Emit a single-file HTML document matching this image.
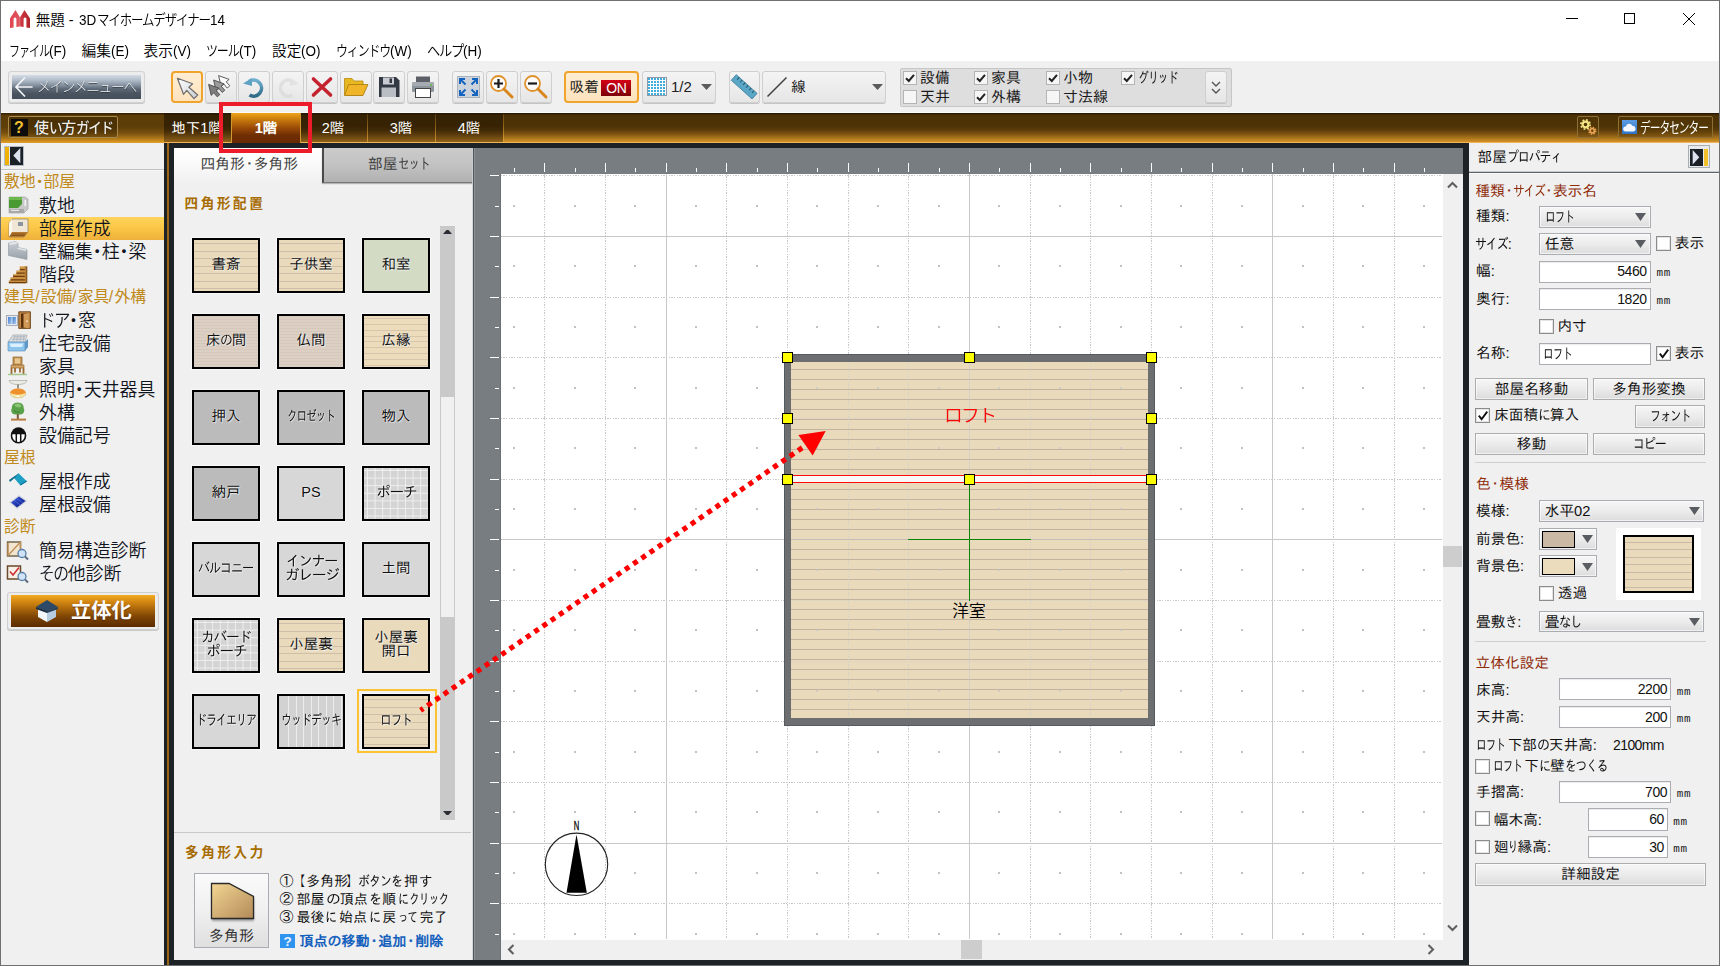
<!DOCTYPE html>
<html lang="ja"><head><meta charset="utf-8"><title>無題 - 3Dマイホームデザイナー14</title>
<style>
*{box-sizing:border-box;margin:0;padding:0}
html,body{width:1720px;height:966px;overflow:hidden;background:#f0f0f0}
body{position:relative;font-family:"Liberation Sans","Noto Sans CJK JP",sans-serif;font-size:15px;color:#000}
#app{position:absolute;left:0;top:0;width:1720px;height:966px;overflow:hidden}
#app div{position:absolute}
#app svg{position:absolute;overflow:visible}
.t{white-space:nowrap;line-height:1}
.kn{display:inline-block;transform-origin:0 50%;white-space:nowrap}
.md{display:inline-block;white-space:nowrap}

.tb{border:1px solid #cfcfcf;border-radius:3px;background:linear-gradient(#f4f4f4,#e6e6e6);box-shadow:0 1px 0 #c4c4c4}
.tbs{border:2px solid #f0a42c;border-radius:4px;background:linear-gradient(#ffedd2,#fde3bd)}
.cb{width:14px;height:14px;border:1px solid #b4b4b4;background:#f6f6f6}
.ft{color:#fff;font-size:14.5px;line-height:30.5px;font-family:'Liberation Sans','IPAGothic','Noto Sans CJK JP',sans-serif;text-align:center;white-space:nowrap}


.lh{color:#c08a1c;font-size:15.8px;line-height:23px;white-space:nowrap;left:4px}
.li{color:#10141c;font-size:17.9px;line-height:23px;white-space:nowrap;left:39px;margin-top:2px;font-weight:350}



.rb{border:2px solid #000;width:68px;height:55px;box-shadow:0 0 0 1px #f9f9f9}
.rl{font-family:"Liberation Sans","IPAGothic","Noto Sans CJK JP",sans-serif;font-size:14.5px;line-height:15px;color:#111;text-align:center;white-space:nowrap;width:68px;text-shadow:0 0 2px rgba(255,255,255,.75),1px 1px 1px rgba(255,255,255,.55)}
.gh{font-weight:700;color:#a76b00;font-size:13.5px;letter-spacing:2.7px;line-height:16px;white-space:nowrap}


.rt{font-family:'Liberation Sans','IPAGothic','Noto Sans CJK JP',sans-serif;font-size:14.7px;line-height:17px;white-space:nowrap;color:#101010}
.dd{border:1px solid #a9adb2;background:linear-gradient(#f6f6f6 0%,#ececec 50%,#dcdcdc 100%);box-shadow:inset 0 0 0 1px rgba(255,255,255,.6)}
.inp{border:1px solid #abadb3;background:#fff;box-shadow:inset 0 1px 1px rgba(0,0,0,.08)}
.btn{border:1px solid #adadad;background:linear-gradient(#f6f6f6 0%,#ebebeb 50%,#dcdcdc 100%);box-shadow:inset 0 0 0 1px rgba(255,255,255,.55);text-align:center}
.ck{width:14.500px;height:14.500px;border:1px solid #8c8c8c;background:#fff;box-shadow:inset 0 0 0 1px #e4e4e4}
.num{font-family:'Liberation Sans',sans-serif;font-size:14px;line-height:17px;text-align:right;color:#111;letter-spacing:-.4px}
.mm{font-family:'Liberation Mono','Liberation Sans',monospace;font-size:11px;line-height:12px;color:#222;letter-spacing:.6px}

</style></head>
<body><div id="app">
<!-- sec_top -->
<div style="left:0px;top:0px;width:1720px;height:61px;background:#fff"></div>
<svg style="left:10px;top:10px" width="20" height="18" viewBox="0 0 20 18"><defs><linearGradient id="lg1" x1="0" x2="1"><stop offset="0" stop-color="#e2444f"/><stop offset="1" stop-color="#dc5560"/></linearGradient><linearGradient id="lg2" x1="0" x2="1"><stop offset="0" stop-color="#d23a45"/><stop offset="1" stop-color="#b0242c"/></linearGradient></defs><path d="M0 18V8.500L5.500 0L9.900 7.200V16.600L6.400 17V8.600Q5 6.500 3.600 8.600V17.400Z" fill="url(#lg1)"/><path d="M10.100 16.600V7.200L14.500 0L20 8.500V18L16.400 17.400V8.600Q15 6.500 13.600 8.600V17Z" fill="url(#lg2)"/></svg>
<div class="t" style="left:35.7px;top:11px;font-size:14.5px;font-weight:350;line-height:19px;"><span style="display:inline-block;width:43.800px;white-space:pre">無題 - </span><span class="kn" style="width:1.189em;transform:scaleX(0.93)">3D</span><span class="kn" style="width:7.830em;letter-spacing:-0.091em;transform:scaleX(0.861)">マイホームデザイナー</span><span class="kn" style="width:1.034em;transform:scaleX(0.93)">14</span></div>
<svg style="left:1560px;top:8px" width="150" height="22" viewBox="0 0 150 22" fill="none" stroke="#000" stroke-width="1"><path d="M6 10.5H18"/><rect x="64.5" y="5.500" width="10" height="10"/><path d="M123 5L135 17M135 5L123 17"/></svg>
<div class="t" style="left:8.5px;top:41px;font-size:14.7px;font-weight:350;line-height:20px;"><span class="kn" style="width:2.736em;letter-spacing:-0.091em;transform:scaleX(0.752)">ファイル</span><span class="kn" style="width:1.175em;transform:scaleX(0.92)">(F)</span></div>
<div class="t" style="left:81.5px;top:41px;font-size:14.7px;font-weight:350;line-height:20px;">編集<span class="kn" style="width:1.226em;transform:scaleX(0.92)">(E)</span></div>
<div class="t" style="left:143.5px;top:41px;font-size:14.7px;font-weight:350;line-height:20px;">表示<span class="kn" style="width:1.226em;transform:scaleX(0.92)">(V)</span></div>
<div class="t" style="left:206px;top:41px;font-size:14.7px;font-weight:350;line-height:20px;"><span class="kn" style="width:2.220em;letter-spacing:-0.091em;transform:scaleX(0.814)">ツール</span><span class="kn" style="width:1.175em;transform:scaleX(0.92)">(T)</span></div>
<div class="t" style="left:272px;top:41px;font-size:14.7px;font-weight:350;line-height:20px;">設定<span class="kn" style="width:1.328em;transform:scaleX(0.92)">(O)</span></div>
<div class="t" style="left:336px;top:41px;font-size:14.7px;font-weight:350;line-height:20px;"><span class="kn" style="width:3.685em;letter-spacing:-0.091em;transform:scaleX(0.811)">ウィンドウ</span><span class="kn" style="width:1.481em;transform:scaleX(0.92)">(W)</span></div>
<div class="t" style="left:427px;top:41px;font-size:14.7px;font-weight:350;line-height:20px;"><span class="kn" style="width:2.460em;letter-spacing:-0.091em;transform:scaleX(0.902)">ヘルプ</span><span class="kn" style="width:1.277em;transform:scaleX(0.92)">(H)</span></div>
<div style="left:0px;top:61px;width:1720px;height:52px;background:#f0f0f0"></div>
<div style="left:8px;top:71px;width:137px;height:32px;border:1px solid #d2d2d2;border-radius:3px;background:#ececec;box-shadow:0 1px 0 #c8c8c8"></div>
<div style="left:11.8px;top:74.5px;width:129.4px;height:24.5px;background:linear-gradient(#d3dbe5 0%,#b4bfcc 20%,#8793a1 42%,#5d6976 58%,#4a5460 78%,#454f5a 100%)"></div>
<svg style="left:14px;top:75.500px" width="20" height="22" viewBox="0 0 20 22" fill="none" stroke="#f2f4f6" stroke-width="1.700"><path d="M18.600 11H2.500M11 1.500L2 11L11 20.500"/></svg>
<div class="t" style="left:37px;top:77.7px;font-size:14.5px;color:#eef1f4;font-weight:300;line-height:18px;text-shadow:0 1px 1px #2a3038;"><span class="kn" style="width:6.840em;letter-spacing:-0.091em;transform:scaleX(0.941)">メインメニューへ</span></div>
<div class="tbs" style="left:171px;top:71px;width:32px;height:32px;"></div>
<div class="tb" style="left:204.7px;top:71px;width:32px;height:32px;"></div>
<div class="tb" style="left:238.4px;top:71px;width:32px;height:32px;"></div>
<div class="tb" style="left:272.1px;top:71px;width:32px;height:32px;"></div>
<div class="tb" style="left:305.8px;top:71px;width:32px;height:32px;"></div>
<div class="tb" style="left:339.5px;top:71px;width:32px;height:32px;"></div>
<div class="tb" style="left:373.2px;top:71px;width:32px;height:32px;"></div>
<div class="tb" style="left:406.9px;top:71px;width:32px;height:32px;"></div>
<div class="tb" style="left:452.3px;top:71px;width:32px;height:32px;"></div>
<div class="tb" style="left:486px;top:71px;width:32px;height:32px;"></div>
<div class="tb" style="left:519.6px;top:71px;width:32px;height:32px;"></div>
<div class="tbs" style="left:564px;top:71px;width:75px;height:32px;"></div>
<div class="tb" style="left:641.5px;top:71px;width:74.5px;height:32px;"></div>
<div class="tb" style="left:728.5px;top:71px;width:31.5px;height:32px;"></div>
<div class="tb" style="left:762.3px;top:71px;width:124.2px;height:32px;"></div>
<svg style="left:168px;top:66px" width="40" height="40" viewBox="168 66 40 40"><defs><linearGradient id="pgr" x1="0" y1="0" x2="1" y2="1"><stop offset="0" stop-color="#ffffff"/><stop offset="1" stop-color="#c9cdd2"/></linearGradient></defs><path d="M177.400 78.200L192.600 83.700L188.900 87.300L197.700 95L194 98.600L186.800 90.300L183.500 94.300Z" fill="url(#pgr)" stroke="#6e6e6e" stroke-width="1.200" stroke-linejoin="round"/></svg>
<svg style="left:204px;top:70px" width="34" height="34" viewBox="204 70 34 34"><path transform="translate(218.6 75.6)" d="M0 0L10.500 3.800L7.600 6.200L11.200 10.200L8.600 12.400L5.200 8.400L2.600 11Z" fill="#fdfdfd" stroke="#4c4c4c" stroke-width=".9" stroke-linejoin="round"/><path transform="translate(213.6 80)" d="M0 0L10.500 3.800L7.600 6.200L11.200 10.200L8.600 12.400L5.200 8.400L2.600 11Z" fill="#9a9a9a" stroke="#4c4c4c" stroke-width=".9" stroke-linejoin="round"/><path transform="translate(208.6 84.4)" d="M0 0L10.500 3.800L7.600 6.200L11.200 10.200L8.600 12.400L5.200 8.400L2.600 11Z" fill="#7c7c7c" stroke="#4c4c4c" stroke-width=".9" stroke-linejoin="round"/></svg>
<svg style="left:241px;top:75px" width="26" height="24" viewBox="0 0 26 24"><defs><linearGradient id="ug" x1="0" y1="0" x2="0" y2="1"><stop offset="0" stop-color="#6fb0d0"/><stop offset="1" stop-color="#2f6a86"/></linearGradient></defs><path d="M8 6.500A8 8 0 1 1 8.500 20" fill="none" stroke="url(#ug)" stroke-width="3.600"/><path d="M2 8.500L11 3V11Z" fill="#5ea3c4"/></svg>
<svg style="left:275px;top:75px" width="26" height="24" viewBox="0 0 26 24" opacity=".55"><path d="M18 6.500A8 8 0 1 0 17.500 20" fill="none" stroke="#d4d4d4" stroke-width="3.600"/><path d="M24 8.500L15 3V11Z" fill="#d8d8d8"/></svg>
<svg style="left:311px;top:77px" width="22" height="20" viewBox="0 0 22 20"><path d="M2.500 2L19.500 18M19.500 2L2.500 18" stroke="#c4222e" stroke-width="3.600" stroke-linecap="round"/></svg>
<svg style="left:343px;top:76px" width="26" height="22" viewBox="0 0 26 22"><path d="M1.500 2.500H9L11 5H20V19H1.500Z" fill="#e8b820" stroke="#b88a10" stroke-width=".8"/><path d="M5.500 8.500H25L20 19.500H1.500Z" fill="#f0b428" stroke="#a87808" stroke-width=".8"/></svg>
<svg style="left:377px;top:75px" width="24" height="24" viewBox="0 0 24 24"><path d="M2 2H19L22.500 5.500V22H2Z" fill="#343a44"/><rect x="6" y="2.500" width="11" height="7" fill="#c8ccd2"/><rect x="12.500" y="3.500" width="2.500" height="4.500" fill="#30353e"/><rect x="4.500" y="12.500" width="14.500" height="9.500" fill="#b9bdc4"/></svg>
<svg style="left:410px;top:75px" width="26" height="24" viewBox="0 0 26 24"><rect x="6" y="1.500" width="14" height="6" fill="#5c6066"/><rect x="2" y="7" width="22" height="10" rx="1.500" fill="#8e949b"/><rect x="2" y="7" width="22" height="4" rx="1.500" fill="#a5abb1"/><rect x="5.500" y="13.500" width="15" height="9" fill="#fff" stroke="#444" stroke-width="1"/><circle cx="21" cy="10" r="1" fill="#5ac030"/></svg>
<svg style="left:457px;top:76px" width="23" height="22" viewBox="0 0 23 22"><rect x=".5" y=".5" width="22" height="21" fill="#ccd3dc" stroke="#aab2bc"/><g stroke="#1565c0" stroke-width="2" fill="none"><path d="M3 8V3H8M3.500 3.500L8.500 8.500"/><path d="M20 8V3H15M19.500 3.500L14.500 8.500"/><path d="M3 14V19H8M3.500 18.500L8.500 13.500"/><path d="M20 14V19H15M19.500 18.500L14.500 13.500"/></g></svg>
<svg style="left:489px;top:74px" width="26" height="26" viewBox="0 0 26 26"><circle cx="9.500" cy="9.500" r="7.500" fill="#fbfbfb" stroke="#e0922a" stroke-width="1.800"/><path d="M15 15L23 23" stroke="#d9861c" stroke-width="3" stroke-linecap="round"/><path d="M5 9.500H14M9.500 5V14" stroke="#1a1a1a" stroke-width="2.200"/></svg>
<svg style="left:523px;top:74px" width="26" height="26" viewBox="0 0 26 26"><circle cx="9.500" cy="9.500" r="7.500" fill="#fbfbfb" stroke="#e0922a" stroke-width="1.800"/><path d="M15 15L23 23" stroke="#d9861c" stroke-width="3" stroke-linecap="round"/><path d="M5 9.500H14" stroke="#1a1a1a" stroke-width="2.200"/></svg>
<svg style="left:732px;top:75px" width="24" height="24" viewBox="0 0 24 24"><g transform="rotate(42 12 12)"><rect x="-2" y="8" width="28" height="7.500" fill="#5aa6c6" stroke="#3d7f9c" stroke-width=".8"/><path d="M2 8v3M6 8v3M10 8v3M14 8v3M18 8v3M22 8v3" stroke="#24566c" stroke-width="1"/></g></svg>
<div class="t" style="left:569.5px;top:79px;font-size:14.7px;color:#222;font-family:'Liberation Sans','IPAGothic','Noto Sans CJK JP',sans-serif;line-height:17px;">吸着</div>
<div style="left:601.3px;top:79.5px;width:30px;height:16px;background:linear-gradient(#d40016,#7c0008);"></div>
<div class="t" style="left:601.3px;top:80px;font-size:14px;color:#fff;line-height:16px;width:30px;text-align:center;letter-spacing:-0.5px;">ON</div>
<div style="left:647px;top:77px;width:20px;height:19px;background:#35a9dc;background-image:linear-gradient(#fff 1px,transparent 1px),linear-gradient(90deg,#fff 1px,transparent 1px);background-size:3px 3px;background-position:-1px -1px;opacity:.95;border:1px solid #8a98a4"></div>
<div class="t" style="left:671px;top:78px;font-size:15px;color:#222;font-family:'Liberation Sans','IPAGothic','Noto Sans CJK JP',sans-serif;line-height:18px;">1/2</div>
<svg style="left:701px;top:84px" width="11" height="6"><path d="M0 0H11L5.500 6Z" fill="#5c5c5c"/></svg>
<svg style="left:766px;top:76px" width="22" height="22"><path d="M1.500 20.500L20.500 1.500" stroke="#444" stroke-width="1.600"/></svg>
<div class="t" style="left:791px;top:79px;font-size:14.7px;color:#222;font-family:'Liberation Sans','IPAGothic','Noto Sans CJK JP',sans-serif;line-height:17px;">線</div>
<svg style="left:872px;top:84px" width="11" height="6"><path d="M0 0H11L5.500 6Z" fill="#5c5c5c"/></svg>
<div style="left:900px;top:68px;width:332px;height:39px;background:#dedede;border:1px solid #c6c6c6;border-radius:2px"></div>
<div class="cb" style="left:903px;top:71px;width:14px;height:14px;"><svg viewBox="0 0 14 14" width="14" height="14" style="left:-1px;top:-1px"><path d="M3 7.2 L5.8 10 L11 3.8" fill="none" stroke="#222" stroke-width="2"/></svg></div><div class="t" style="left:920px;top:70px;font-size:15px;color:#1a1a1a;font-family:'Liberation Sans','IPAGothic','Noto Sans CJK JP',sans-serif;line-height:16px;">設備</div>
<div class="cb" style="left:903px;top:90px;width:14px;height:14px;"></div><div class="t" style="left:920px;top:89px;font-size:15px;color:#1a1a1a;font-family:'Liberation Sans','IPAGothic','Noto Sans CJK JP',sans-serif;line-height:16px;">天井</div>
<div class="cb" style="left:974px;top:71px;width:14px;height:14px;"><svg viewBox="0 0 14 14" width="14" height="14" style="left:-1px;top:-1px"><path d="M3 7.2 L5.8 10 L11 3.8" fill="none" stroke="#222" stroke-width="2"/></svg></div><div class="t" style="left:991px;top:70px;font-size:15px;color:#1a1a1a;font-family:'Liberation Sans','IPAGothic','Noto Sans CJK JP',sans-serif;line-height:16px;">家具</div>
<div class="cb" style="left:974px;top:90px;width:14px;height:14px;"><svg viewBox="0 0 14 14" width="14" height="14" style="left:-1px;top:-1px"><path d="M3 7.2 L5.8 10 L11 3.8" fill="none" stroke="#222" stroke-width="2"/></svg></div><div class="t" style="left:991px;top:89px;font-size:15px;color:#1a1a1a;font-family:'Liberation Sans','IPAGothic','Noto Sans CJK JP',sans-serif;line-height:16px;">外構</div>
<div class="cb" style="left:1046px;top:71px;width:14px;height:14px;"><svg viewBox="0 0 14 14" width="14" height="14" style="left:-1px;top:-1px"><path d="M3 7.2 L5.8 10 L11 3.8" fill="none" stroke="#222" stroke-width="2"/></svg></div><div class="t" style="left:1063px;top:70px;font-size:15px;color:#1a1a1a;font-family:'Liberation Sans','IPAGothic','Noto Sans CJK JP',sans-serif;line-height:16px;">小物</div>
<div class="cb" style="left:1046px;top:90px;width:14px;height:14px;"></div><div class="t" style="left:1063px;top:89px;font-size:15px;color:#1a1a1a;font-family:'Liberation Sans','IPAGothic','Noto Sans CJK JP',sans-serif;line-height:16px;">寸法線</div>
<div class="cb" style="left:1121px;top:71px;width:14px;height:14px;"><svg viewBox="0 0 14 14" width="14" height="14" style="left:-1px;top:-1px"><path d="M3 7.2 L5.8 10 L11 3.8" fill="none" stroke="#222" stroke-width="2"/></svg></div><div class="t" style="left:1138px;top:70px;font-size:15px;color:#1a1a1a;font-family:'Liberation Sans','IPAGothic','Noto Sans CJK JP',sans-serif;line-height:16px;"><span class="kn" style="width:2.640em;letter-spacing:-0.091em;transform:scaleX(0.726)">グリッド</span></div>
<div class="tb" style="left:1205px;top:71px;width:22px;height:32px;"></div>
<svg style="left:1210px;top:80px" width="12" height="16" fill="none" stroke="#555" stroke-width="1.400"><path d="M2 2L6 6L10 2M2 9L6 13L10 9"/></svg>
<div style="left:0px;top:112px;width:1600px;height:1px;background:#fafafa"></div>
<div style="left:0px;top:113px;width:1720px;height:30px;background:linear-gradient(#2a1a05 0,#2a1a05 1px,#4b3105 2px,#4e3306 13px,#5c3c09 17px,#7e5312 21px,#a8741b 25px,#d08e26 28.500px,#f0b458 29px,#f0b458 30px)"></div>
<div style="left:164px;top:114px;width:339px;height:28px;background:rgba(12,6,0,.34)"></div>
<div style="left:0px;top:113px;width:164px;height:30px;background:linear-gradient(#3a2404 0,#3a2404 1px,#5c3c07 2.500px,#5e3e08 14px,#78500f 20px,#a8741a 25px,#d4921f 28.500px,#e4a030 30px)"></div>
<div style="left:8px;top:116px;width:110px;height:22px;border:1px solid #a88a4c;border-radius:2px;background:rgba(40,24,0,.32)"></div>
<div style="left:10.5px;top:119px;width:17px;height:16.5px;background:#0c0c0c"></div>
<div class="t" style="left:10.5px;top:119px;font-size:16px;color:#f2c230;font-weight:700;line-height:17px;width:17px;text-align:center;">?</div>
<div class="t" style="left:34px;top:119px;font-size:15px;color:#f0ece4;font-weight:500;line-height:18px;text-shadow:0 0 1px #000;">使<span class="kn" style="width:0.820em;letter-spacing:-0.091em;transform:scaleX(0.902)">い</span>方<span class="kn" style="width:2.460em;letter-spacing:-0.091em;transform:scaleX(0.902)">ガイド</span></div>
<div style="left:231px;top:113px;width:70px;height:30px;background:linear-gradient(#f0a51a 0%,#c87a0c 22%,#9a4a06 50%,#6e2d03 75%,#6a2a02 100%);border-left:1px solid #d09a30;border-right:1px solid #d09a30"></div>
<div style="left:367px;top:114px;width:1px;height:28px;background:linear-gradient(rgba(200,140,40,.25),rgba(220,160,50,.8))"></div>
<div style="left:435px;top:114px;width:1px;height:28px;background:linear-gradient(rgba(200,140,40,.25),rgba(220,160,50,.8))"></div>
<div style="left:503px;top:114px;width:1px;height:28px;background:linear-gradient(rgba(200,140,40,.25),rgba(220,160,50,.8))"></div>
<div class="ft" style="left:163px;top:113px;width:68px;height:30px;">地下1階</div>
<div class="ft" style="left:231px;top:113px;width:70px;height:30px;font-weight:700">1階</div>
<div class="ft" style="left:299px;top:113px;width:68px;height:30px;">2階</div>
<div class="ft" style="left:367px;top:113px;width:68px;height:30px;">3階</div>
<div class="ft" style="left:435px;top:113px;width:68px;height:30px;">4階</div>
<div style="left:1577px;top:116px;width:22px;height:22px;border:1px solid #8f7034;border-radius:2px;background:rgba(90,60,10,.35)"></div>
<div style="left:1618px;top:116px;width:95px;height:22px;border:1px solid #8f7034;border-radius:2px;background:rgba(90,60,10,.35)"></div>
<div style="left:1622px;top:119.5px;width:15px;height:14.5px;background:linear-gradient(#5b9be0,#2f74c8)"></div>
<svg style="left:1623px;top:122px" width="13" height="10"><path d="M2.500 9.500a2.500 2.500 0 0 1 .3-5a3.500 3.500 0 0 1 6.600-.6a2.800 2.800 0 0 1 .6 5.600z" fill="#f4f7fb"/></svg>
<div class="t" style="left:1640px;top:119px;font-size:14.5px;color:#fff;line-height:18px;"><span class="kn" style="width:4.690em;letter-spacing:-0.091em;transform:scaleX(0.737)">データセンター</span></div>
<svg style="left:1580px;top:118px" width="18" height="18"><g fill="none"><circle cx="5.500" cy="6.500" r="2.900" stroke="#f2e483" stroke-width="2.200"/><circle cx="5.500" cy="6.500" r="4.600" stroke="#f2e483" stroke-width="1.700" stroke-dasharray="1.800 1.810"/><circle cx="12.300" cy="12.800" r="2.100" stroke="#eaa352" stroke-width="1.800"/><circle cx="12.300" cy="12.800" r="3.500" stroke="#eaa352" stroke-width="1.400" stroke-dasharray="1.400 1.350"/></g></svg>
<!-- sec_left -->
<div style="left:0px;top:143px;width:164px;height:823px;background:#f0f0f0"></div>
<div style="left:4px;top:146px;width:20px;height:20px;background:#e2e6ea;border:1px solid #b4bcc4"></div>
<div style="left:5px;top:147px;width:4.2px;height:18px;background:#efb108"></div>
<div style="left:10px;top:147px;width:12.6px;height:17.6px;background:#1a2026"></div>
<svg style="left:13px;top:148px" width="8" height="16"><path d="M7.300 0V15.200L.3 7.600Z" fill="#dde2ee"/></svg>
<div style="left:1px;top:169px;width:163px;height:1px;background:#c2c2c2"></div>
<div style="left:1px;top:170px;width:163px;height:1px;background:#f7f7f7"></div>
<div class="lh" style="top:170px">敷地<span class="md" style="width:.5em;text-indent:-.25em">・</span>部屋</div>
<svg style="left:5px;top:194px" width="26" height="22" viewBox="0 0 26 22"><path d="M4 3H20L23 5V15L19 19H4Z" fill="#c9c9c9" stroke="#9a9a9a" stroke-width=".6"/><path d="M4 3H17V10L13 14H4Z" fill="#4a9a34"/><path d="M4 3H17V6H4Z" fill="#6cb84c"/><path d="M4 15H19V19H4Z" fill="#a8a8a8"/><rect x="19.500" y="6" width="1.500" height="6" fill="#f4f4f4"/><rect x="6" y="15.800" width="8" height="1.200" fill="#e8e8e8"/></svg>
<div class="li" style="top:193px">敷地</div>
<div style="left:1px;top:217px;width:163px;height:23px;background:linear-gradient(#ffd45c 0%,#fbc748 45%,#eeb03a 100%)"></div>
<svg style="left:5px;top:217px" width="26" height="22" viewBox="0 0 26 22"><path d="M7 2H23V15L19 20H4V6Z" fill="#efe6d6" stroke="#8a7a60" stroke-width=".7"/><path d="M7 2L4 6V20L7 15Z" fill="#fbf7ee"/><path d="M7 15H23L19 20H4Z" fill="#b87a30"/><path d="M6.500 17H20.500M5.500 18.500H19.500" stroke="#7a4a14" stroke-width=".8"/><rect x="13" y="5" width="5" height="4" fill="#8b949c"/></svg>
<div class="li" style="top:216px">部屋作成</div>
<svg style="left:5px;top:240px" width="26" height="22" viewBox="0 0 26 22"><defs><linearGradient id="wg" x1="0" y1="0" x2="0" y2="1"><stop offset="0" stop-color="#c9ced4"/><stop offset="1" stop-color="#99a1a9"/></linearGradient></defs><path d="M3.500 3L11 1.500L13 3.500V7.500L22 9.500V19.500L3.500 15.500Z" fill="url(#wg)" stroke="#8d959d" stroke-width=".6"/><path d="M3.500 3L11 1.500L13 3.500L5.500 5Z" fill="#e2e5e9"/><path d="M13 7.500L22 9.500L20.500 11L12 9Z" fill="#dfe3e7"/></svg>
<div class="li" style="top:239px">壁編集<span class="md" style="width:0.5em;text-indent:-0.250em">・</span>柱<span class="md" style="width:0.5em;text-indent:-0.250em">・</span>梁</div>
<svg style="left:5px;top:263px" width="26" height="22" viewBox="0 0 26 22"><g transform="translate(3 2.500) scale(.84)"><path d="M19 1H23V21H19Z" fill="#8a5a20"/><path d="M14 1H21V6H14Z M10 6H21V10H10Z M6 10H21V14H6Z M3 14H21V18H3Z M1 18H21V21H1Z" fill="#c89040"/><path d="M14 5H20M10 9H20M6 13H20M3 17H20M1 20.500H21" stroke="#6e3e0c" stroke-width="1.500"/><path d="M14 1.500H20M10 6.500H14M6 10.500H10M3 14.500H6" stroke="#e8c080" stroke-width="1"/></g></svg>
<div class="li" style="top:262px">階段</div>
<div class="lh" style="top:285px">建具<span style="display:inline-block;width:.33em;text-indent:-.03em">/</span>設備<span style="display:inline-block;width:.33em;text-indent:-.03em">/</span>家具<span style="display:inline-block;width:.33em;text-indent:-.03em">/</span>外構</div>
<svg style="left:5px;top:309px" width="26" height="22" viewBox="0 0 26 22"><defs><linearGradient id="dwg" x1="0" y1="0" x2="1" y2="1"><stop offset="0" stop-color="#3f7fcf"/><stop offset="1" stop-color="#a8c8ee"/></linearGradient></defs><rect x="1.500" y="6.500" width="11" height="10" fill="#e4e8ee" stroke="#9aa0a8" stroke-width=".8"/><rect x="3" y="8" width="3.600" height="7" fill="url(#dwg)"/><rect x="7.400" y="8" width="3.600" height="7" fill="url(#dwg)"/><path d="M13.800 2.800H25.400V19.400H13.800Z" fill="#c08a48" stroke="#6a3c10" stroke-width=".9"/><path d="M16 4.500H22.500V18.800H16Z" fill="#5a2e0a"/><path d="M18.500 5L23.600 4.200V19.200L18.500 18.500Z" fill="#d29a58"/><rect x="21.200" y="11.500" width="1.600" height="1.400" fill="#f4ecd8"/></svg>
<div class="li" style="top:308px"><span class="kn" style="width:1.680em;letter-spacing:-0.091em;transform:scaleX(0.924)">ドア</span><span class="md" style="width:0.5em;text-indent:-0.250em">・</span>窓</div>
<svg style="left:5px;top:332px" width="26" height="22" viewBox="0 0 26 22"><path d="M3 10L8 3H22L20 10Z" fill="#e0e4e8" stroke="#8d949c" stroke-width=".6"/><path d="M8.500 4.500H20.500M7.500 6H20M6.500 7.500H19.800M10 3.500L8 9M13 3.500L11.500 9M16 3.500L15 9M19 3.500L18.500 9" stroke="#9aa2aa" stroke-width=".5"/><path d="M3 10H20V19H3Z" fill="#8cc4ec" stroke="#5a8eb8" stroke-width=".6"/><path d="M20 10L23 7V15L20 19Z" fill="#5e96c4"/><path d="M4.500 11.500H18.500L17 15H6Z" fill="#d8f0ff"/></svg>
<div class="li" style="top:331px">住宅設備</div>
<svg style="left:5px;top:355px" width="26" height="22" viewBox="0 0 26 22"><path d="M8 2H17V10H8Z" fill="#c89858" stroke="#8a5e28" stroke-width=".7"/><path d="M10 3.500H15V8.500H10Z" fill="#e8c890"/><path d="M6 10H19V13H6Z" fill="#d4a468" stroke="#8a5e28" stroke-width=".6"/><path d="M6.500 13V19M18.500 13V19M10 13V17.500M15 13V17.500" stroke="#9a6a30" stroke-width="1.800"/><path d="M3 19.500H22" stroke="#a8c890" stroke-width="1.500"/></svg>
<div class="li" style="top:354px">家具</div>
<svg style="left:5px;top:378px" width="26" height="22" viewBox="0 0 26 22"><path d="M4 2.500H22Q21 6.500 13 6.500Q5 6.500 4 2.500Z" fill="#ecece6" stroke="#a8a8a0" stroke-width=".7"/><path d="M13 6.500V10.500" stroke="#8a8a80" stroke-width="1.800"/><ellipse cx="13" cy="15.500" rx="7.800" ry="4.400" fill="#f4e7a6" stroke="#c8a860" stroke-width=".5"/><path d="M5.200 15A7.800 4.600 0 0 1 20.800 15Q13 18.500 5.200 15Z" fill="#f0902c"/><rect x="11.800" y="17.600" width="2.400" height="1.400" fill="#fff"/></svg>
<div class="li" style="top:377px">照明<span class="md" style="width:0.5em;text-indent:-0.250em">・</span>天井器具</div>
<svg style="left:5px;top:401px" width="26" height="22" viewBox="0 0 26 22"><path d="M12.800 1.500C17 1.500 19.200 4.500 18.600 7.200C20.200 9.200 19 13 15.500 13.600H10C6.500 13 5.300 9.200 7 7.200C6.400 4.500 8.600 1.500 12.800 1.500Z" fill="#5aa24a"/><path d="M12.800 2.500C15 2.500 16.800 4.200 16.200 6C13 7 9.800 5.800 9.400 4.300C10.200 3.200 11.400 2.500 12.800 2.500Z" fill="#8cc474"/><path d="M9 9.500Q11 12 14.500 11" stroke="#3c7c34" stroke-width="1" fill="none"/><path d="M11.800 13H13.800V18H11.800Z" fill="#7a5a34"/><path d="M6 17.600H21V19.600H6Z" fill="#b87c40"/></svg>
<div class="li" style="top:400px">外構</div>
<svg style="left:5px;top:424px" width="26" height="22" viewBox="0 0 26 22"><circle cx="13.500" cy="11.800" r="7" fill="#fff" stroke="#111" stroke-width="1.600"/><path d="M6.500 10.300A7 7 0 0 1 20.500 10.300Z" fill="#111"/><path d="M11.300 9.500V18.300M15.700 9.500V18.300" stroke="#111" stroke-width="1.500"/></svg>
<div class="li" style="top:423px">設備記号</div>
<div class="lh" style="top:446px">屋根</div>
<svg style="left:5px;top:470px" width="26" height="22" viewBox="0 0 26 22"><path d="M13.600 3.300L22 11.500L15.500 15.500L9 8Z" fill="#1d9fc4"/><path d="M22 11.500L15.500 15.500L15.200 14.200L21.500 10.600Z" fill="#147a9a"/><path d="M4 10L13.600 3.300L10.200 7.600L5 12Z" fill="#0f6f8c"/></svg>
<div class="li" style="top:469px">屋根作成</div>
<svg style="left:5px;top:493px" width="26" height="22" viewBox="0 0 26 22"><defs><linearGradient id="sg" x1="0" y1="0" x2="1" y2="1"><stop offset="0" stop-color="#3a5ae0"/><stop offset="1" stop-color="#0c1880"/></linearGradient></defs><path d="M4 9.500L14 2L22.500 8L12 16Z" fill="#d4d8dc"/><path d="M6 9.500L14 3.500L20.500 8L12 14.500Z" fill="url(#sg)"/><path d="M9 7.300L15.500 12M11.500 5.400L18 10" stroke="#6a88f0" stroke-width=".5"/></svg>
<div class="li" style="top:492px">屋根設備</div>
<div class="lh" style="top:515px">診断</div>
<svg style="left:5px;top:539px" width="26" height="22" viewBox="0 0 26 22"><rect x="2.500" y="3" width="13" height="14" fill="#f2e6d0" stroke="#6a5a40" stroke-width="1.400"/><path d="M3 16.500L15 3.500M3 3.500V17M15.500 3V17" stroke="#c09058" stroke-width="1.400"/><circle cx="17" cy="14.500" r="4" fill="#cfe4f8" stroke="#5a7ea8" stroke-width="1.300"/><path d="M20 17.500L23 20.500" stroke="#5a6a80" stroke-width="2"/></svg>
<div class="li" style="top:538px">簡易構造診断</div>
<svg style="left:5px;top:562px" width="26" height="22" viewBox="0 0 26 22"><rect x="2.500" y="4" width="13" height="13" fill="#f6f0e6" stroke="#6a4a2a" stroke-width="1.500"/><path d="M5 9.500L8 13L14 5.500" fill="none" stroke="#d03038" stroke-width="1.600"/><circle cx="17" cy="14.500" r="4" fill="#cfe4f8" stroke="#5a7ea8" stroke-width="1.300"/><path d="M20 17.500L23 20.500" stroke="#5a6a80" stroke-width="2"/></svg>
<div class="li" style="top:561px"><span class="kn" style="width:1.600em;letter-spacing:-0.091em;transform:scaleX(0.880)">その</span>他診断</div>
<div style="left:7px;top:592px;width:152px;height:38px;background:#ececec;border:1px solid #cfcfcf;border-radius:3px;box-shadow:0 1px 0 #c8c8c8"></div>
<div style="left:11px;top:595px;width:144px;height:32px;background:linear-gradient(#f2ac22 0%,#d98c14 18%,#a8640a 45%,#7a4204 70%,#5c2c00 100%)"></div>
<svg style="left:35px;top:599px" width="24" height="24" viewBox="0 0 24 24"><path d="M1 8L12 1L23 8L12 12Z" fill="#2c4a68"/><path d="M3 9.500L12 13V23L3 18Z" fill="#f4f7fa"/><path d="M12 13L21 9.500V18L12 23Z" fill="#b8cce0"/><path d="M1 8L12 12V14L1 10Z" fill="#1a3048"/><path d="M23 8L12 12V14L23 10Z" fill="#22405e"/></svg>
<div class="t" style="left:71px;top:599px;font-size:20.2px;color:#fff;font-weight:700;line-height:25px;text-shadow:0 1px 1px rgba(60,20,0,.6);">立体化</div>
<!-- sec_canvas -->
<div style="left:164px;top:143px;width:1305px;height:823px;background:#1d2227"></div>
<div style="left:167px;top:143px;width:2px;height:823px;background:#9a6516"></div>
<div style="left:473px;top:148px;width:990px;height:812px;background:#787d81"></div>
<div style="left:501px;top:174px;width:942px;height:766px;background:#fff"></div>
<div style="left:500px;top:174px;width:1px;height:786px;background:#6c7176"></div>
<div style="left:1443px;top:174px;width:20px;height:786px;background:#f0f0f0"></div>
<div style="left:501px;top:940px;width:962px;height:20px;background:#f0f0f0"></div>
<div style="left:1443px;top:546px;width:19px;height:21px;background:#cdcdcd"></div>
<div style="left:961px;top:940px;width:21px;height:19px;background:#cdcdcd"></div>
<svg style="left:1447px;top:180px" width="12" height="9"><path d="M1 7.500L5.500 3L10 7.500" fill="none" stroke="#5f5f5f" stroke-width="2.100"/></svg>
<svg style="left:1447px;top:924px" width="12" height="9"><path d="M1 1.500L5.500 6L10 1.500" fill="none" stroke="#5f5f5f" stroke-width="2.100"/></svg>
<svg style="left:506px;top:944px" width="9" height="12"><path d="M7.500 1L3 5.500L7.500 10" fill="none" stroke="#5f5f5f" stroke-width="2.100"/></svg>
<svg style="left:1427px;top:944px" width="9" height="12"><path d="M1.500 1L6 5.500L1.500 10" fill="none" stroke="#5f5f5f" stroke-width="2.100"/></svg>
<svg style="left:473px;top:148px" width="970" height="792" viewBox="473 148 970 792" shape-rendering="crispEdges"><path d="M544.5 163V172M575.5 168V172M605.5 163V172M635.5 168V172M666.5 163V172M696.5 168V172M726.5 163V172M757.5 168V172M787.5 163V172M817.5 168V172M848.5 163V172M878.5 168V172M908.5 163V172M939.5 168V172M969.5 163V172M999.5 168V172M1030.5 163V172M1060.5 168V172M1090.5 163V172M1121.5 168V172M1151.5 163V172M1181.5 168V172M1212.5 163V172M1242.5 168V172M1272.5 163V172M1303.5 168V172M1333.5 163V172M1363.5 168V172M1394.5 163V172M1424.5 168V172M514.5 168V172M490 175.5H499M495 206.5H499M490 236.5H499M495 266.5H499M490 297.5H499M495 327.5H499M490 357.5H499M495 388.5H499M490 418.5H499M495 448.5H499M490 479.5H499M495 509.5H499M490 539.5H499M495 570.5H499M490 600.5H499M495 630.5H499M490 661.5H499M495 691.5H499M490 721.5H499M495 752.5H499M490 782.5H499M495 812.5H499M490 843.5H499M495 873.5H499M490 903.5H499M495 934.5H499" stroke="#fff" stroke-width="1" fill="none"/><path d="M666.5 174V939M969.5 174V939M1272.5 174V939M501 236.5H1442M501 539.5H1442M501 843.5H1442" stroke="#c8c8c8" stroke-width="1" fill="none"/><path d="M544.5 174V939M605.5 174V939M726.5 174V939M787.5 174V939M848.5 174V939M908.5 174V939M1030.5 174V939M1090.5 174V939M1151.5 174V939M1212.5 174V939M1333.5 174V939M1394.5 174V939M501 175.5H1442M501 297.5H1442M501 357.5H1442M501 418.5H1442M501 479.5H1442M501 600.5H1442M501 661.5H1442M501 721.5H1442M501 782.5H1442M501 903.5H1442" stroke="#c8c8c8" stroke-width="1" fill="none" stroke-dasharray="1 1 2 1 1 2"/><path d="M513 205h2v2h-2zM513 265h2v2h-2zM513 326h2v2h-2zM513 387h2v2h-2zM513 447h2v2h-2zM513 508h2v2h-2zM513 569h2v2h-2zM513 629h2v2h-2zM513 690h2v2h-2zM513 751h2v2h-2zM513 811h2v2h-2zM513 872h2v2h-2zM513 933h2v2h-2zM574 205h2v2h-2zM574 265h2v2h-2zM574 326h2v2h-2zM574 387h2v2h-2zM574 447h2v2h-2zM574 508h2v2h-2zM574 569h2v2h-2zM574 629h2v2h-2zM574 690h2v2h-2zM574 751h2v2h-2zM574 811h2v2h-2zM574 872h2v2h-2zM574 933h2v2h-2zM634 205h2v2h-2zM634 265h2v2h-2zM634 326h2v2h-2zM634 387h2v2h-2zM634 447h2v2h-2zM634 508h2v2h-2zM634 569h2v2h-2zM634 629h2v2h-2zM634 690h2v2h-2zM634 751h2v2h-2zM634 811h2v2h-2zM634 872h2v2h-2zM634 933h2v2h-2zM695 205h2v2h-2zM695 265h2v2h-2zM695 326h2v2h-2zM695 387h2v2h-2zM695 447h2v2h-2zM695 508h2v2h-2zM695 569h2v2h-2zM695 629h2v2h-2zM695 690h2v2h-2zM695 751h2v2h-2zM695 811h2v2h-2zM695 872h2v2h-2zM695 933h2v2h-2zM756 205h2v2h-2zM756 265h2v2h-2zM756 326h2v2h-2zM756 387h2v2h-2zM756 447h2v2h-2zM756 508h2v2h-2zM756 569h2v2h-2zM756 629h2v2h-2zM756 690h2v2h-2zM756 751h2v2h-2zM756 811h2v2h-2zM756 872h2v2h-2zM756 933h2v2h-2zM816 205h2v2h-2zM816 265h2v2h-2zM816 326h2v2h-2zM816 387h2v2h-2zM816 447h2v2h-2zM816 508h2v2h-2zM816 569h2v2h-2zM816 629h2v2h-2zM816 690h2v2h-2zM816 751h2v2h-2zM816 811h2v2h-2zM816 872h2v2h-2zM816 933h2v2h-2zM877 205h2v2h-2zM877 265h2v2h-2zM877 326h2v2h-2zM877 387h2v2h-2zM877 447h2v2h-2zM877 508h2v2h-2zM877 569h2v2h-2zM877 629h2v2h-2zM877 690h2v2h-2zM877 751h2v2h-2zM877 811h2v2h-2zM877 872h2v2h-2zM877 933h2v2h-2zM938 205h2v2h-2zM938 265h2v2h-2zM938 326h2v2h-2zM938 387h2v2h-2zM938 447h2v2h-2zM938 508h2v2h-2zM938 569h2v2h-2zM938 629h2v2h-2zM938 690h2v2h-2zM938 751h2v2h-2zM938 811h2v2h-2zM938 872h2v2h-2zM938 933h2v2h-2zM998 205h2v2h-2zM998 265h2v2h-2zM998 326h2v2h-2zM998 387h2v2h-2zM998 447h2v2h-2zM998 508h2v2h-2zM998 569h2v2h-2zM998 629h2v2h-2zM998 690h2v2h-2zM998 751h2v2h-2zM998 811h2v2h-2zM998 872h2v2h-2zM998 933h2v2h-2zM1059 205h2v2h-2zM1059 265h2v2h-2zM1059 326h2v2h-2zM1059 387h2v2h-2zM1059 447h2v2h-2zM1059 508h2v2h-2zM1059 569h2v2h-2zM1059 629h2v2h-2zM1059 690h2v2h-2zM1059 751h2v2h-2zM1059 811h2v2h-2zM1059 872h2v2h-2zM1059 933h2v2h-2zM1120 205h2v2h-2zM1120 265h2v2h-2zM1120 326h2v2h-2zM1120 387h2v2h-2zM1120 447h2v2h-2zM1120 508h2v2h-2zM1120 569h2v2h-2zM1120 629h2v2h-2zM1120 690h2v2h-2zM1120 751h2v2h-2zM1120 811h2v2h-2zM1120 872h2v2h-2zM1120 933h2v2h-2zM1180 205h2v2h-2zM1180 265h2v2h-2zM1180 326h2v2h-2zM1180 387h2v2h-2zM1180 447h2v2h-2zM1180 508h2v2h-2zM1180 569h2v2h-2zM1180 629h2v2h-2zM1180 690h2v2h-2zM1180 751h2v2h-2zM1180 811h2v2h-2zM1180 872h2v2h-2zM1180 933h2v2h-2zM1241 205h2v2h-2zM1241 265h2v2h-2zM1241 326h2v2h-2zM1241 387h2v2h-2zM1241 447h2v2h-2zM1241 508h2v2h-2zM1241 569h2v2h-2zM1241 629h2v2h-2zM1241 690h2v2h-2zM1241 751h2v2h-2zM1241 811h2v2h-2zM1241 872h2v2h-2zM1241 933h2v2h-2zM1302 205h2v2h-2zM1302 265h2v2h-2zM1302 326h2v2h-2zM1302 387h2v2h-2zM1302 447h2v2h-2zM1302 508h2v2h-2zM1302 569h2v2h-2zM1302 629h2v2h-2zM1302 690h2v2h-2zM1302 751h2v2h-2zM1302 811h2v2h-2zM1302 872h2v2h-2zM1302 933h2v2h-2zM1362 205h2v2h-2zM1362 265h2v2h-2zM1362 326h2v2h-2zM1362 387h2v2h-2zM1362 447h2v2h-2zM1362 508h2v2h-2zM1362 569h2v2h-2zM1362 629h2v2h-2zM1362 690h2v2h-2zM1362 751h2v2h-2zM1362 811h2v2h-2zM1362 872h2v2h-2zM1362 933h2v2h-2zM1423 205h2v2h-2zM1423 265h2v2h-2zM1423 326h2v2h-2zM1423 387h2v2h-2zM1423 447h2v2h-2zM1423 508h2v2h-2zM1423 569h2v2h-2zM1423 629h2v2h-2zM1423 690h2v2h-2zM1423 751h2v2h-2zM1423 811h2v2h-2zM1423 872h2v2h-2zM1423 933h2v2h-2z" fill="#c2c2c2"/><rect x="784" y="354" width="371" height="372" fill="#6d6e70"/><rect x="784.500" y="354.500" width="370" height="371" fill="none" stroke="#555a60" stroke-width="1"/><rect x="791" y="362" width="357" height="356" fill="#e9dabc"/><path d="M791 369.5H1148M791 379.5H1148M791 389.5H1148M791 399.5H1148M791 409.5H1148M791 419.5H1148M791 429.5H1148M791 439.5H1148M791 449.5H1148M791 459.5H1148M791 469.5H1148M791 489.5H1148M791 499.5H1148M791 509.5H1148M791 519.5H1148M791 529.5H1148M791 539.5H1148M791 549.5H1148M791 559.5H1148M791 569.5H1148M791 579.5H1148M791 589.5H1148M791 599.5H1148M791 609.5H1148M791 619.5H1148M791 629.5H1148M791 639.5H1148M791 649.5H1148M791 659.5H1148M791 669.5H1148M791 679.5H1148M791 689.5H1148M791 699.5H1148M791 709.5H1148" stroke="#c3b2a0" stroke-width="1" fill="none"/><clipPath id="rc"><rect x="791" y="362" width="357" height="356"/></clipPath><g clip-path="url(#rc)" opacity=".55"><path d="M666.5 174V939M969.5 174V939M1272.5 174V939M501 236.5H1442M501 539.5H1442M501 843.5H1442" stroke="#c4c8cc" stroke-width="1" fill="none"/><path d="M544.5 174V939M605.5 174V939M726.5 174V939M787.5 174V939M848.5 174V939M908.5 174V939M1030.5 174V939M1090.5 174V939M1151.5 174V939M1212.5 174V939M1333.5 174V939M1394.5 174V939M501 175.5H1442M501 297.5H1442M501 357.5H1442M501 418.5H1442M501 479.5H1442M501 600.5H1442M501 661.5H1442M501 721.5H1442M501 782.5H1442M501 903.5H1442" stroke="#c4ccd6" stroke-width="1" fill="none" stroke-dasharray="1 1 2 1 1 2"/><path d="M513 205h2v2h-2zM513 265h2v2h-2zM513 326h2v2h-2zM513 387h2v2h-2zM513 447h2v2h-2zM513 508h2v2h-2zM513 569h2v2h-2zM513 629h2v2h-2zM513 690h2v2h-2zM513 751h2v2h-2zM513 811h2v2h-2zM513 872h2v2h-2zM513 933h2v2h-2zM574 205h2v2h-2zM574 265h2v2h-2zM574 326h2v2h-2zM574 387h2v2h-2zM574 447h2v2h-2zM574 508h2v2h-2zM574 569h2v2h-2zM574 629h2v2h-2zM574 690h2v2h-2zM574 751h2v2h-2zM574 811h2v2h-2zM574 872h2v2h-2zM574 933h2v2h-2zM634 205h2v2h-2zM634 265h2v2h-2zM634 326h2v2h-2zM634 387h2v2h-2zM634 447h2v2h-2zM634 508h2v2h-2zM634 569h2v2h-2zM634 629h2v2h-2zM634 690h2v2h-2zM634 751h2v2h-2zM634 811h2v2h-2zM634 872h2v2h-2zM634 933h2v2h-2zM695 205h2v2h-2zM695 265h2v2h-2zM695 326h2v2h-2zM695 387h2v2h-2zM695 447h2v2h-2zM695 508h2v2h-2zM695 569h2v2h-2zM695 629h2v2h-2zM695 690h2v2h-2zM695 751h2v2h-2zM695 811h2v2h-2zM695 872h2v2h-2zM695 933h2v2h-2zM756 205h2v2h-2zM756 265h2v2h-2zM756 326h2v2h-2zM756 387h2v2h-2zM756 447h2v2h-2zM756 508h2v2h-2zM756 569h2v2h-2zM756 629h2v2h-2zM756 690h2v2h-2zM756 751h2v2h-2zM756 811h2v2h-2zM756 872h2v2h-2zM756 933h2v2h-2zM816 205h2v2h-2zM816 265h2v2h-2zM816 326h2v2h-2zM816 387h2v2h-2zM816 447h2v2h-2zM816 508h2v2h-2zM816 569h2v2h-2zM816 629h2v2h-2zM816 690h2v2h-2zM816 751h2v2h-2zM816 811h2v2h-2zM816 872h2v2h-2zM816 933h2v2h-2zM877 205h2v2h-2zM877 265h2v2h-2zM877 326h2v2h-2zM877 387h2v2h-2zM877 447h2v2h-2zM877 508h2v2h-2zM877 569h2v2h-2zM877 629h2v2h-2zM877 690h2v2h-2zM877 751h2v2h-2zM877 811h2v2h-2zM877 872h2v2h-2zM877 933h2v2h-2zM938 205h2v2h-2zM938 265h2v2h-2zM938 326h2v2h-2zM938 387h2v2h-2zM938 447h2v2h-2zM938 508h2v2h-2zM938 569h2v2h-2zM938 629h2v2h-2zM938 690h2v2h-2zM938 751h2v2h-2zM938 811h2v2h-2zM938 872h2v2h-2zM938 933h2v2h-2zM998 205h2v2h-2zM998 265h2v2h-2zM998 326h2v2h-2zM998 387h2v2h-2zM998 447h2v2h-2zM998 508h2v2h-2zM998 569h2v2h-2zM998 629h2v2h-2zM998 690h2v2h-2zM998 751h2v2h-2zM998 811h2v2h-2zM998 872h2v2h-2zM998 933h2v2h-2zM1059 205h2v2h-2zM1059 265h2v2h-2zM1059 326h2v2h-2zM1059 387h2v2h-2zM1059 447h2v2h-2zM1059 508h2v2h-2zM1059 569h2v2h-2zM1059 629h2v2h-2zM1059 690h2v2h-2zM1059 751h2v2h-2zM1059 811h2v2h-2zM1059 872h2v2h-2zM1059 933h2v2h-2zM1120 205h2v2h-2zM1120 265h2v2h-2zM1120 326h2v2h-2zM1120 387h2v2h-2zM1120 447h2v2h-2zM1120 508h2v2h-2zM1120 569h2v2h-2zM1120 629h2v2h-2zM1120 690h2v2h-2zM1120 751h2v2h-2zM1120 811h2v2h-2zM1120 872h2v2h-2zM1120 933h2v2h-2zM1180 205h2v2h-2zM1180 265h2v2h-2zM1180 326h2v2h-2zM1180 387h2v2h-2zM1180 447h2v2h-2zM1180 508h2v2h-2zM1180 569h2v2h-2zM1180 629h2v2h-2zM1180 690h2v2h-2zM1180 751h2v2h-2zM1180 811h2v2h-2zM1180 872h2v2h-2zM1180 933h2v2h-2zM1241 205h2v2h-2zM1241 265h2v2h-2zM1241 326h2v2h-2zM1241 387h2v2h-2zM1241 447h2v2h-2zM1241 508h2v2h-2zM1241 569h2v2h-2zM1241 629h2v2h-2zM1241 690h2v2h-2zM1241 751h2v2h-2zM1241 811h2v2h-2zM1241 872h2v2h-2zM1241 933h2v2h-2zM1302 205h2v2h-2zM1302 265h2v2h-2zM1302 326h2v2h-2zM1302 387h2v2h-2zM1302 447h2v2h-2zM1302 508h2v2h-2zM1302 569h2v2h-2zM1302 629h2v2h-2zM1302 690h2v2h-2zM1302 751h2v2h-2zM1302 811h2v2h-2zM1302 872h2v2h-2zM1302 933h2v2h-2zM1362 205h2v2h-2zM1362 265h2v2h-2zM1362 326h2v2h-2zM1362 387h2v2h-2zM1362 447h2v2h-2zM1362 508h2v2h-2zM1362 569h2v2h-2zM1362 629h2v2h-2zM1362 690h2v2h-2zM1362 751h2v2h-2zM1362 811h2v2h-2zM1362 872h2v2h-2zM1362 933h2v2h-2zM1423 205h2v2h-2zM1423 265h2v2h-2zM1423 326h2v2h-2zM1423 387h2v2h-2zM1423 447h2v2h-2zM1423 508h2v2h-2zM1423 569h2v2h-2zM1423 629h2v2h-2zM1423 690h2v2h-2zM1423 751h2v2h-2zM1423 811h2v2h-2zM1423 872h2v2h-2zM1423 933h2v2h-2z" fill="#bcc4ce"/></g><rect x="791.500" y="475.500" width="356" height="7" fill="#f9f9f9" stroke="#ff0a0a" stroke-width="1"/><path d="M969.500 485V601M908 539.500H1031" stroke="#0a840a" stroke-width="1" fill="none"/><rect x="782.5" y="352.5" width="10" height="10" fill="#ffff00" stroke="#000" stroke-width="1"/><rect x="964.5" y="352.5" width="10" height="10" fill="#ffff00" stroke="#000" stroke-width="1"/><rect x="1146.5" y="352.5" width="10" height="10" fill="#ffff00" stroke="#000" stroke-width="1"/><rect x="782.5" y="413.5" width="10" height="10" fill="#ffff00" stroke="#000" stroke-width="1"/><rect x="1146.5" y="413.5" width="10" height="10" fill="#ffff00" stroke="#000" stroke-width="1"/><rect x="782.5" y="474.5" width="10" height="10" fill="#ffff00" stroke="#000" stroke-width="1"/><rect x="964.5" y="474.5" width="10" height="10" fill="#ffff00" stroke="#000" stroke-width="1"/><rect x="1146.5" y="474.5" width="10" height="10" fill="#ffff00" stroke="#000" stroke-width="1"/></svg>
<div class="t" style="left:943.8px;top:407.3px;font-size:18px;color:#f60808;font-weight:350;line-height:19px;"><span class="kn" style="width:2.850em;letter-spacing:-0.091em;transform:scaleX(1.045)">ロフト</span></div>
<div class="t" style="left:952.3px;top:601.6px;font-size:16.8px;font-weight:350;line-height:19px;">洋室</div>
<svg style="left:540px;top:815px" width="75" height="85" viewBox="540 815 75 85"><circle cx="576.500" cy="864.300" r="31.200" fill="none" stroke="#222" stroke-width="1.100"/><path d="M576.500 834.500L566.500 892.800H586.800Z" fill="#000"/><text x="0" y="0" transform="translate(576.6 830.4) scale(.56 1)" text-anchor="middle" font-family="Liberation Sans,sans-serif" font-size="13.6" fill="#000" stroke="#000" stroke-width=".35">N</text></svg>
<!-- sec_palette -->
<div style="left:174px;top:148px;width:298px;height:812px;background:#f0f0f0"></div>
<div style="left:472px;top:148px;width:1px;height:812px;background:#d4d6d8"></div>
<div style="left:473px;top:148px;width:1px;height:812px;background:#50565c"></div>
<div style="left:474px;top:148px;width:1px;height:812px;background:#8a9098"></div>
<div style="left:174px;top:148px;width:149px;height:35px;background:linear-gradient(#ffffff 0%,#fafafa 45%,#f0f0f0 100%)"></div>
<div style="left:322px;top:148px;width:150px;height:34.5px;background:linear-gradient(#cbcbcb 0%,#c2c2c2 50%,#b1b1b1 100%);border-left:2px solid #4a4a4a;border-bottom:1.500px solid #787878;box-shadow:0 1px 1px rgba(0,0,0,.25)"></div>
<div class="t" style="left:200.5px;top:156px;font-size:14.8px;color:#3c3c3c;font-family:'Liberation Sans','IPAGothic','Noto Sans CJK JP',sans-serif;line-height:17px;">四角形<span class="md" style="width:0.6em;text-indent:-0.200em">・</span>多角形</div>
<div class="t" style="left:368px;top:156px;font-size:14.8px;color:#3c3c3c;font-family:'Liberation Sans','IPAGothic','Noto Sans CJK JP',sans-serif;line-height:17px;">部屋<span class="kn" style="width:2.145em;letter-spacing:-0.091em;transform:scaleX(0.786)">セット</span></div>
<div class="t gh" style="left:184.500px;top:196px">四角形配置</div>
<div class="rb" style="left:192px;top:238px;width:68px;height:55px;background:#e9dabc;background-image:linear-gradient(transparent 3px,#cfbfa8 3px,#cfbfa8 4px,transparent 4px,transparent 11px,#cfbfa8 11px,#cfbfa8 12px,transparent 12px,transparent 18px,#cfbfa8 18px,#cfbfa8 19px,transparent 19px,transparent 26px,#cfbfa8 26px,#cfbfa8 27px,transparent 27px,transparent 33px,#cfbfa8 33px,#cfbfa8 34px,transparent 34px,transparent 41px,#cfbfa8 41px,#cfbfa8 42px,transparent 42px,transparent 48px,#cfbfa8 48px,#cfbfa8 49px,transparent 49px)"></div>
<div class="rl" style="left:192px;top:256.5px">書斎</div>
<div class="rb" style="left:277px;top:238px;width:68px;height:55px;background:#e9dabc;background-image:linear-gradient(transparent 3px,#cfbfa8 3px,#cfbfa8 4px,transparent 4px,transparent 11px,#cfbfa8 11px,#cfbfa8 12px,transparent 12px,transparent 18px,#cfbfa8 18px,#cfbfa8 19px,transparent 19px,transparent 26px,#cfbfa8 26px,#cfbfa8 27px,transparent 27px,transparent 33px,#cfbfa8 33px,#cfbfa8 34px,transparent 34px,transparent 41px,#cfbfa8 41px,#cfbfa8 42px,transparent 42px,transparent 48px,#cfbfa8 48px,#cfbfa8 49px,transparent 49px)"></div>
<div class="rl" style="left:277px;top:256.5px">子供室</div>
<div class="rb" style="left:362px;top:238px;width:68px;height:55px;background:#d3dbc5"></div>
<div class="rl" style="left:362px;top:256.5px">和室</div>
<div class="rb" style="left:192px;top:314px;width:68px;height:55px;background:#dcd0c5;background-image:repeating-linear-gradient(rgba(190,170,150,.22) 0,rgba(190,170,150,.22) 1px,transparent 1px,transparent 3px)"></div>
<div class="rl" style="left:192px;top:332.5px">床<span class="kn" style="width:0.800em;letter-spacing:-0.091em;transform:scaleX(0.880)">の</span>間</div>
<div class="rb" style="left:277px;top:314px;width:68px;height:55px;background:#dcd0c5;background-image:repeating-linear-gradient(rgba(190,170,150,.22) 0,rgba(190,170,150,.22) 1px,transparent 1px,transparent 3px)"></div>
<div class="rl" style="left:277px;top:332.5px">仏間</div>
<div class="rb" style="left:362px;top:314px;width:68px;height:55px;background:#ecdcbc;background-image:linear-gradient(transparent 2px,#d6c6ac 2px,#d6c6ac 3px,transparent 3px,transparent 8px,#d6c6ac 8px,#d6c6ac 9px,transparent 9px,transparent 14px,#d6c6ac 14px,#d6c6ac 15px,transparent 15px,transparent 20px,#d6c6ac 20px,#d6c6ac 21px,transparent 21px,transparent 25px,#d6c6ac 25px,#d6c6ac 26px,transparent 26px,transparent 31px,#d6c6ac 31px,#d6c6ac 32px,transparent 32px,transparent 37px,#d6c6ac 37px,#d6c6ac 38px,transparent 38px,transparent 43px,#d6c6ac 43px,#d6c6ac 44px,transparent 44px,transparent 49px,#d6c6ac 49px,#d6c6ac 50px,transparent 50px)"></div>
<div class="rl" style="left:362px;top:332.5px">広縁</div>
<div class="rb" style="left:192px;top:390px;width:68px;height:55px;background:#bbbbbb"></div>
<div class="rl" style="left:192px;top:408.5px">押入</div>
<div class="rb" style="left:277px;top:390px;width:68px;height:55px;background:#bbbbbb"></div>
<div class="rl" style="left:277px;top:408.5px"><span class="kn" style="width:3.310em;letter-spacing:-0.091em;transform:scaleX(0.728)">クロゼット</span></div>
<div class="rb" style="left:362px;top:390px;width:68px;height:55px;background:#bbbbbb"></div>
<div class="rl" style="left:362px;top:408.5px">物入</div>
<div class="rb" style="left:192px;top:466px;width:68px;height:55px;background:#bbbbbb"></div>
<div class="rl" style="left:192px;top:484.5px">納戸</div>
<div class="rb" style="left:277px;top:466px;width:68px;height:55px;background:#d7d7d7"></div>
<div class="rl" style="left:277px;top:484.5px">PS</div>
<div class="rb" style="left:362px;top:466px;width:68px;height:55px;background:#d4d4d4;background-image:linear-gradient(#efefef 1px,transparent 1px),linear-gradient(90deg,#efefef 1px,transparent 1px);background-size:7.600px 7.600px;background-position:3px 2px"></div>
<div class="rl" style="left:362px;top:484.5px"><span class="kn" style="width:2.760em;letter-spacing:-0.091em;transform:scaleX(1.012)">ポーチ</span></div>
<div class="rb" style="left:192px;top:542px;width:68px;height:55px;background:#d7d7d7"></div>
<div class="rl" style="left:192px;top:560.5px"><span class="kn" style="width:3.795em;letter-spacing:-0.091em;transform:scaleX(0.835)">バルコニー</span></div>
<div class="rb" style="left:277px;top:542px;width:68px;height:55px;background:#d7d7d7"></div>
<div class="rl" style="left:277px;top:555.3px;line-height:13.2px"><span class="kn" style="width:3.516em;letter-spacing:-0.091em;transform:scaleX(0.967)">インナー</span><br><span class="kn" style="width:3.724em;letter-spacing:-0.091em;transform:scaleX(1.024)">ガレージ</span></div>
<div class="rb" style="left:362px;top:542px;width:68px;height:55px;background:#d7d7d7"></div>
<div class="rl" style="left:362px;top:560.5px">土間</div>
<div class="rb" style="left:192px;top:618px;width:68px;height:55px;background:#d4d4d4;background-image:linear-gradient(#efefef 1px,transparent 1px),linear-gradient(90deg,#efefef 1px,transparent 1px);background-size:7.600px 7.600px;background-position:3px 2px"></div>
<div class="rl" style="left:192px;top:631.3px;line-height:13.2px"><span class="kn" style="width:3.448em;letter-spacing:-0.091em;transform:scaleX(0.948)">カバード</span><br><span class="kn" style="width:2.760em;letter-spacing:-0.091em;transform:scaleX(1.012)">ポーチ</span></div>
<div class="rb" style="left:277px;top:618px;width:68px;height:55px;background:#e9dabc;background-image:linear-gradient(transparent 3px,#cfbfa8 3px,#cfbfa8 4px,transparent 4px,transparent 11px,#cfbfa8 11px,#cfbfa8 12px,transparent 12px,transparent 18px,#cfbfa8 18px,#cfbfa8 19px,transparent 19px,transparent 26px,#cfbfa8 26px,#cfbfa8 27px,transparent 27px,transparent 33px,#cfbfa8 33px,#cfbfa8 34px,transparent 34px,transparent 41px,#cfbfa8 41px,#cfbfa8 42px,transparent 42px,transparent 48px,#cfbfa8 48px,#cfbfa8 49px,transparent 49px)"></div>
<div class="rl" style="left:277px;top:636.5px">小屋裏</div>
<div class="rb" style="left:362px;top:618px;width:68px;height:55px;background:#e9dabc"></div>
<div class="rl" style="left:362px;top:631.3px;line-height:13.2px">小屋裏<br>開口</div>
<div class="rb" style="left:192px;top:694px;width:68px;height:55px;background:#d7d7d7"></div>
<div class="rl" style="left:192px;top:712.5px"><span class="kn" style="width:4.140em;letter-spacing:-0.091em;transform:scaleX(0.759)">ドライエリア</span></div>
<div class="rb" style="left:277px;top:694px;width:68px;height:55px;background:#d2d2d2;background-image:repeating-linear-gradient(90deg,#d2d2d2 0,#d2d2d2 6.5px,#ececec 6.5px,#ececec 7.5px);background-position:3px 0"></div>
<div class="rl" style="left:277px;top:712.5px"><span class="kn" style="width:4.140em;letter-spacing:-0.091em;transform:scaleX(0.759)">ウッドデッキ</span></div>
<div class="rb" style="left:362px;top:694px;width:68px;height:55px;background:#e9dabc;background-image:linear-gradient(transparent 3px,#cfbfa8 3px,#cfbfa8 4px,transparent 4px,transparent 11px,#cfbfa8 11px,#cfbfa8 12px,transparent 12px,transparent 18px,#cfbfa8 18px,#cfbfa8 19px,transparent 19px,transparent 26px,#cfbfa8 26px,#cfbfa8 27px,transparent 27px,transparent 33px,#cfbfa8 33px,#cfbfa8 34px,transparent 34px,transparent 41px,#cfbfa8 41px,#cfbfa8 42px,transparent 42px,transparent 48px,#cfbfa8 48px,#cfbfa8 49px,transparent 49px)"></div>
<div class="rl" style="left:362px;top:712.5px"><span class="kn" style="width:2.208em;letter-spacing:-0.091em;transform:scaleX(0.810)">ロフト</span></div>
<div style="left:357px;top:688.5px;width:79.5px;height:64.5px;border:2px solid #fcc230"></div>
<div style="left:440px;top:226px;width:15px;height:594px;background:#c9c9c9"></div>
<div style="left:441px;top:397px;width:13px;height:220px;background:#f0f0f0"></div>
<svg style="left:443px;top:229px" width="9" height="5"><path d="M0 5H9L5.500 1H3.500Z" fill="#2a2e34"/></svg>
<svg style="left:443px;top:811px" width="9" height="5"><path d="M0 0H9L5.500 4H3.500Z" fill="#2a2e34"/></svg>
<div style="left:174px;top:832px;width:297px;height:1px;background:#c8c8c8"></div>
<div class="t gh" style="left:185px;top:845px">多角形入力</div>
<div style="left:194px;top:873px;width:75px;height:75px;border:1px solid #a9adb3;background:linear-gradient(#fafafa 0%,#f0f0f0 50%,#dfdfdf 100%)"></div>
<svg style="left:208px;top:880px" width="50" height="44" viewBox="0 0 50 44"><defs><linearGradient id="pg" x1="0" y1="0" x2="1" y2="1"><stop offset="0" stop-color="#f3d694"/><stop offset="1" stop-color="#b38a58"/></linearGradient><filter id="pgs" x="-20%" y="-20%" width="140%" height="150%"><feGaussianBlur stdDeviation="1.200"/></filter></defs><path d="M4 5H21L46 18V41H4Z" fill="rgba(0,0,0,.35)" filter="url(#pgs)"/><path d="M3.500 3.500H21L45.500 16.500V38.500H3.500Z" fill="url(#pg)" stroke="#2a2a2a" stroke-width="1.300"/></svg>
<div class="t" style="left:194px;top:927px;font-size:15px;color:#333;font-family:'Liberation Sans','IPAGothic','Noto Sans CJK JP',sans-serif;line-height:17px;width:75px;text-align:center;">多角形</div>
<div class="t" style="left:279.6px;top:872.6px;font-size:14px;line-height:16px;color:#111;font-family:'Liberation Sans','IPAGothic','Noto Sans CJK JP',sans-serif"><span style="display:inline-block;width:11.86px;white-space:nowrap">①</span><span style="display:inline-block;width:14.83px;white-space:nowrap">【</span><span style="display:inline-block;width:39.53px;white-space:nowrap">多角形</span><span style="display:inline-block;width:11.86px;white-space:nowrap">】</span><span style="display:inline-block;width:46.45px;white-space:nowrap"><span class="kn" style="width:3.136em;letter-spacing:-0.091em;transform:scaleX(0.862)">ボタンを</span></span><span style="display:inline-block;width:14.63px;white-space:nowrap">押</span><span style="display:inline-block;white-space:nowrap"><span class="kn" style="width:0.890em;letter-spacing:-0.091em;transform:scaleX(0.979)">す</span></span></div>
<div class="t" style="left:279.6px;top:890.5px;font-size:14px;line-height:16px;color:#111;font-family:'Liberation Sans','IPAGothic','Noto Sans CJK JP',sans-serif"><span style="display:inline-block;width:16.80px;white-space:nowrap">②</span><span style="display:inline-block;width:29.45px;white-space:nowrap">部屋</span><span style="display:inline-block;width:14.03px;white-space:nowrap"><span class="kn" style="width:0.960em;letter-spacing:-0.091em;transform:scaleX(1.056)">の</span></span><span style="display:inline-block;width:28.66px;white-space:nowrap">頂点</span><span style="display:inline-block;width:13.84px;white-space:nowrap"><span class="kn" style="width:0.847em;letter-spacing:-0.091em;transform:scaleX(0.932)">を</span></span><span style="display:inline-block;width:15.22px;white-space:nowrap">順</span><span style="display:inline-block;width:11.07px;white-space:nowrap"><span class="kn" style="width:0.720em;letter-spacing:-0.091em;transform:scaleX(0.792)">に</span></span><span style="display:inline-block;white-space:nowrap"><span class="kn" style="width:2.808em;letter-spacing:-0.091em;transform:scaleX(0.772)">クリック</span></span></div>
<div class="t" style="left:279.6px;top:908.6px;font-size:14px;line-height:16px;color:#111;font-family:'Liberation Sans','IPAGothic','Noto Sans CJK JP',sans-serif"><span style="display:inline-block;width:16.80px;white-space:nowrap">③</span><span style="display:inline-block;width:29.06px;white-space:nowrap">最後</span><span style="display:inline-block;width:13.44px;white-space:nowrap"><span class="kn" style="width:0.791em;letter-spacing:-0.091em;transform:scaleX(0.870)">に</span></span><span style="display:inline-block;width:30.05px;white-space:nowrap">始点</span><span style="display:inline-block;width:13.44px;white-space:nowrap"><span class="kn" style="width:0.791em;letter-spacing:-0.091em;transform:scaleX(0.870)">に</span></span><span style="display:inline-block;width:15.22px;white-space:nowrap">戻</span><span style="display:inline-block;width:21.94px;white-space:nowrap"><span class="kn" style="width:1.342em;letter-spacing:-0.091em;transform:scaleX(0.738)">って</span></span><span style="display:inline-block;white-space:nowrap">完了</span></div>
<div style="left:280px;top:933.5px;width:15px;height:14.5px;background:#2f93f0"></div>
<div class="t" style="left:280px;top:933.5px;font-size:13.5px;color:#eaf4ff;font-weight:700;line-height:15px;width:15px;text-align:center;">?</div>
<div class="t" style="left:299.5px;top:932px;font-size:14px;color:#1560bd;font-family:'Liberation Sans','IPAGothic','Noto Sans CJK JP',sans-serif;font-weight:700;line-height:18px;">頂点の移動<span class="md" style="width:0.63em;text-indent:-0.185em">・</span>追加<span class="md" style="width:0.63em;text-indent:-0.185em">・</span>削除</div>
<!-- sec_right -->
<div style="left:1469px;top:143px;width:251px;height:823px;background:#f0f0f0"></div>
<div class="t rt" style="left:1477.5px;top:148.7px;font-size:14.7px;color:#101010;">部屋<span class="kn" style="width:3.700em;letter-spacing:-0.091em;transform:scaleX(0.814)">プロパティ</span></div>
<div style="left:1469px;top:171px;width:251px;height:1px;background:#c9ccce"></div>
<div style="left:1469px;top:172px;width:251px;height:1px;background:#5e646a"></div>
<div style="left:1469px;top:173px;width:251px;height:1px;background:#f8f8f8"></div>
<div style="left:1688px;top:145px;width:22px;height:23px;background:#e8eaec;border:1px solid #a8aeb4"></div>
<div style="left:1690.2px;top:148.5px;width:12.8px;height:17.2px;background:#1a2026"></div>
<div style="left:1704px;top:148.5px;width:4px;height:17.2px;background:#f2c02a"></div>
<svg style="left:1692px;top:150px" width="8" height="15"><path d="M.7 0V14.400L7.300 7.200Z" fill="#dde2ee"/></svg>
<div class="t rt" style="left:1475.6px;top:182.5px;font-size:14.7px;color:#8e2a08;">種類<span class="md" style="width:0.55em;text-indent:-0.225em">・</span><span class="kn" style="width:2.160em;letter-spacing:-0.091em;transform:scaleX(0.792)">サイズ</span><span class="md" style="width:0.55em;text-indent:-0.225em">・</span>表示名</div>
<div class="t rt" style="left:1476px;top:208.1px;font-size:14.7px;color:#101010;">種類:</div>
<div class="dd" style="left:1539.3px;top:205.5px;width:111.4px;height:22px;"></div><div class="t rt" style="left:1544.8px;top:208.5px;font-size:14.7px;color:#101010;"><span class="kn" style="width:1.980em;letter-spacing:-0.091em;transform:scaleX(0.726)">ロフト</span></div><svg style="left:1635.2px;top:212.7px" width="11" height="8"><path d="M0 0H11L5.5 8Z" fill="#595d62"/></svg>
<div class="t rt" style="left:1475px;top:235.7px;font-size:14.7px;color:#101010;"><span class="kn" style="width:2.220em;letter-spacing:-0.091em;transform:scaleX(0.814)">サイズ</span>:</div>
<div class="dd" style="left:1539.3px;top:233.2px;width:111.4px;height:21.8px;"></div><div class="t rt" style="left:1544.8px;top:236.1px;font-size:14.7px;color:#101010;">任意</div><svg style="left:1635.2px;top:240.29999999999998px" width="11" height="8"><path d="M0 0H11L5.5 8Z" fill="#595d62"/></svg>
<div class="ck" style="left:1656px;top:236.3px;width:14.5px;height:14.5px;"></div>
<div class="t rt" style="left:1674.8px;top:235.3px;font-size:14.7px;color:#101010;">表示</div>
<div class="t rt" style="left:1476px;top:263.3px;font-size:14.7px;color:#101010;">幅:</div>
<div class="inp" style="left:1539.3px;top:260.5px;width:111.4px;height:22px;"></div><div class="t num" style="left:1539.3px;top:263.0px;width:107.4px">5460</div>
<div class="t mm" style="left:1656.5px;top:267px">mm</div>
<div class="t rt" style="left:1476px;top:290.7px;font-size:14.7px;color:#101010;">奥行:</div>
<div class="inp" style="left:1539.3px;top:288px;width:111.4px;height:22px;"></div><div class="t num" style="left:1539.3px;top:290.5px;width:107.4px">1820</div>
<div class="t mm" style="left:1656.5px;top:294.5px">mm</div>
<div class="ck" style="left:1539.3px;top:319.2px;width:14.5px;height:14.5px;"></div>
<div class="t rt" style="left:1557.4px;top:318.1px;font-size:14.7px;color:#101010;">内寸</div>
<div class="t rt" style="left:1476px;top:345.3px;font-size:14.7px;color:#101010;">名称:</div>
<div class="inp" style="left:1539.3px;top:343px;width:111.4px;height:21.8px;"></div><div class="t rt" style="left:1543.3px;top:345.7px;font-size:14.7px;color:#101010;"><span class="kn" style="width:1.980em;letter-spacing:-0.091em;transform:scaleX(0.726)">ロフト</span></div>
<div class="ck" style="left:1656px;top:346.2px;width:14.5px;height:14.5px;"><svg viewBox="0 0 14 14" width="14" height="14" style="left:0;top:0"><path d="M2.800 6.600L5.600 10.200L11.200 2.600" fill="none" stroke="#111" stroke-width="1.900"/></svg></div>
<div class="t rt" style="left:1674.8px;top:345.1px;font-size:14.7px;color:#101010;">表示</div>
<div class="btn" style="left:1475px;top:378.3px;width:113px;height:21.6px;"></div><div class="t rt" style="left:1475px;top:380.90000000000003px;width:113px;text-align:center">部屋名移動</div>
<div class="btn" style="left:1593px;top:378.3px;width:112px;height:21.6px;"></div><div class="t rt" style="left:1593px;top:380.90000000000003px;width:112px;text-align:center">多角形変換</div>
<div class="ck" style="left:1475px;top:408.2px;width:14.5px;height:14.5px;"><svg viewBox="0 0 14 14" width="14" height="14" style="left:0;top:0"><path d="M2.800 6.600L5.600 10.200L11.200 2.600" fill="none" stroke="#111" stroke-width="1.900"/></svg></div>
<div class="t rt" style="left:1494px;top:407.0px;font-size:14.7px;color:#101010;">床面積<span class="kn" style="width:0.800em;letter-spacing:-0.091em;transform:scaleX(0.880)">に</span>算入</div>
<div class="btn" style="left:1635px;top:405.2px;width:70px;height:22.4px;"></div><div class="t rt" style="left:1635px;top:408.2px;width:70px;text-align:center"><span class="kn" style="width:2.760em;letter-spacing:-0.091em;transform:scaleX(0.759)">フォント</span></div>
<div class="btn" style="left:1475px;top:433.3px;width:113px;height:21.6px;"></div><div class="t rt" style="left:1475px;top:435.90000000000003px;width:113px;text-align:center">移動</div>
<div class="btn" style="left:1593px;top:433.3px;width:112px;height:21.6px;"></div><div class="t rt" style="left:1593px;top:435.90000000000003px;width:112px;text-align:center"><span class="kn" style="width:2.220em;letter-spacing:-0.091em;transform:scaleX(0.814)">コピー</span></div>
<div style="left:1475px;top:462px;width:231px;height:1px;background:#cfcfcf"></div>
<div class="t rt" style="left:1476px;top:476.3px;font-size:14.7px;color:#8e2a08;">色<span class="md" style="width:0.6em;text-indent:-0.200em">・</span>模様</div>
<div class="t rt" style="left:1476px;top:503.0px;font-size:14.7px;color:#101010;">模様:</div>
<div class="dd" style="left:1539.2px;top:500px;width:165px;height:21.6px;"></div><div class="t rt" style="left:1544.7px;top:502.8px;font-size:14.7px;color:#101010;">水平02</div><svg style="left:1688.7px;top:507.0px" width="11" height="8"><path d="M0 0H11L5.5 8Z" fill="#595d62"/></svg>
<div class="t rt" style="left:1476px;top:531.0px;font-size:14.7px;color:#101010;">前景色:</div>
<div class="dd" style="left:1539.2px;top:528.4px;width:58px;height:21.5px;"></div>
<div style="left:1542px;top:531px;width:32.5px;height:17px;background:#c9b9a5;border:1.500px solid #000"></div>
<svg style="left:1582px;top:535.3px" width="11" height="8"><path d="M0 0H11L5.5 8Z" fill="#595d62"/></svg>
<div class="t rt" style="left:1476px;top:558.3px;font-size:14.7px;color:#101010;">背景色:</div>
<div class="dd" style="left:1539.2px;top:555.4px;width:58px;height:22px;"></div>
<div style="left:1542px;top:558px;width:32.5px;height:17px;background:#ecdcbe;border:1.500px solid #000"></div>
<svg style="left:1582px;top:562.6px" width="11" height="8"><path d="M0 0H11L5.5 8Z" fill="#595d62"/></svg>
<div style="left:1616px;top:528.4px;width:85px;height:71.5px;background:#fff"></div>
<div style="left:1623px;top:535px;width:71px;height:58px;border:2px solid #000;background:#e9dabc;background-image:repeating-linear-gradient(#e9dabc 0,#e9dabc 6.5px,#c9b9a5 6.5px,#c9b9a5 7.5px);background-position:0 -2px"></div>
<div class="ck" style="left:1539.2px;top:586.3px;width:14.5px;height:14.5px;"></div>
<div class="t rt" style="left:1557.8px;top:585.3px;font-size:14.7px;color:#101010;">透過</div>
<div class="t rt" style="left:1476px;top:614.1px;font-size:14.7px;color:#101010;">畳敷<span class="kn" style="width:0.800em;letter-spacing:-0.091em;transform:scaleX(0.880)">き</span>:</div>
<div class="dd" style="left:1539.2px;top:611.3px;width:165px;height:21.2px;"></div><div class="t rt" style="left:1544.7px;top:613.9px;font-size:14.7px;color:#101010;">畳<span class="kn" style="width:1.500em;letter-spacing:-0.091em;transform:scaleX(0.825)">なし</span></div><svg style="left:1688.7px;top:618.1px" width="11" height="8"><path d="M0 0H11L5.5 8Z" fill="#595d62"/></svg>
<div style="left:1475px;top:641px;width:231px;height:1px;background:#cfcfcf"></div>
<div class="t rt" style="left:1475.6px;top:655.3px;font-size:14.7px;color:#8e2a08;">立体化設定</div>
<div class="t rt" style="left:1476px;top:681.8px;font-size:14.7px;color:#101010;">床高:</div>
<div class="inp" style="left:1559.2px;top:678px;width:112px;height:22.4px;"></div><div class="t num" style="left:1559.2px;top:680.7px;width:108px">2200</div>
<div class="t mm" style="left:1676.7px;top:685.5px">mm</div>
<div class="t rt" style="left:1476px;top:709.2px;font-size:14.7px;color:#101010;">天井高:</div>
<div class="inp" style="left:1559.2px;top:706px;width:112px;height:22px;"></div><div class="t num" style="left:1559.2px;top:708.5px;width:108px">200</div>
<div class="t mm" style="left:1676.7px;top:713px">mm</div>
<div class="t rt" style="left:1475.600px;top:736.9px"><span class="kn" style="width:1.980em;letter-spacing:-0.091em;transform:scaleX(0.726)">ロフト</span><span style="display:inline-block;width:.2em"></span>下部<span class="kn" style="width:0.800em;letter-spacing:-0.091em;transform:scaleX(0.880)">の</span>天井高:<span style="display:inline-block;width:1.1em"></span><span style="font-size:14px;letter-spacing:-.6px">2100mm</span></div>
<div class="ck" style="left:1475.3px;top:759.3px;width:14.5px;height:14.5px;"></div>
<div class="t rt" style="left:1493px;top:758.2px"><span class="kn" style="width:1.980em;letter-spacing:-0.091em;transform:scaleX(0.726)">ロフト</span><span style="display:inline-block;width:.15em"></span>下<span class="kn" style="width:0.750em;letter-spacing:-0.091em;transform:scaleX(0.825)">に</span>壁<span class="kn" style="width:2.880em;letter-spacing:-0.091em;transform:scaleX(0.792)">をつくる</span></div>
<div class="t rt" style="left:1476px;top:783.9px;font-size:14.7px;color:#101010;">手摺高:</div>
<div class="inp" style="left:1559.2px;top:781px;width:112px;height:22px;"></div><div class="t num" style="left:1559.2px;top:783.5px;width:108px">700</div>
<div class="t mm" style="left:1676.7px;top:788px">mm</div>
<div class="ck" style="left:1475.3px;top:811.2px;width:14.5px;height:14.5px;"></div>
<div class="t rt" style="left:1493.8px;top:811.9px;font-size:14.7px;color:#101010;">幅木高:</div>
<div class="inp" style="left:1588px;top:808px;width:80px;height:22.5px;"></div><div class="t num" style="left:1588px;top:810.75px;width:76px">60</div>
<div class="t mm" style="left:1673.3px;top:815.5px">mm</div>
<div class="ck" style="left:1475.3px;top:839.5px;width:14.5px;height:14.5px;"></div>
<div class="t rt" style="left:1493.8px;top:838.5px;font-size:14.7px;color:#101010;">廻<span class="kn" style="width:0.620em;letter-spacing:-0.091em;transform:scaleX(0.682)">り</span>縁高:</div>
<div class="inp" style="left:1588px;top:836px;width:80px;height:22px;"></div><div class="t num" style="left:1588px;top:838.5px;width:76px">30</div>
<div class="t mm" style="left:1673.3px;top:843px">mm</div>
<div class="btn" style="left:1475.3px;top:863px;width:230.7px;height:23px;"></div><div class="t rt" style="left:1475.3px;top:866.3px;width:230.7px;text-align:center">詳細設定</div>
<!-- sec_overlay -->
<div style="left:219.4px;top:101.9px;width:92.8px;height:51.3px;border:4.600px solid #ec1c2a"></div>
<svg style="left:400px;top:420px" width="440" height="300" viewBox="400 420 440 300"><path d="M420.6 710.3L805.5 445.5" stroke="#ff0000" stroke-width="5.200" stroke-dasharray="5 5" stroke-dashoffset="1.800" fill="none"/><path d="M825.700 431.100L798.400 435.100L812.700 455.400Z" fill="#ff0000"/></svg>
<div style="left:0px;top:0px;width:1720px;height:1px;background:#707070"></div>
<div style="left:0px;top:0px;width:1px;height:966px;background:#707070"></div>
<div style="left:1719px;top:0px;width:1px;height:966px;background:#707070"></div>
<div style="left:0px;top:965px;width:1720px;height:1px;background:#707070"></div>
</div></body></html>
